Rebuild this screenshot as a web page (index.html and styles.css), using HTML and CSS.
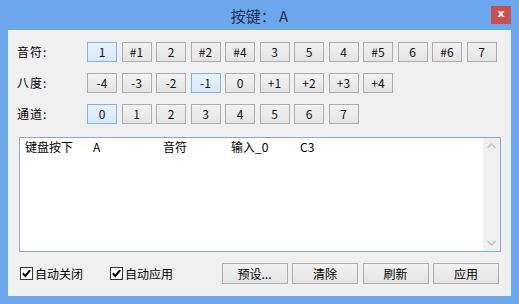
FILE: index.html
```html
<!DOCTYPE html>
<html lang="zh">
<head>
<meta charset="utf-8">
<title>按键</title>
<link rel="stylesheet" href="styles.css">
</head>
<body>
<div class="window">
  <div class="titlebar">
    <span class="spacer"></span>
    <span class="title">按键： A</span>
    <span class="close">x</span>
  </div>
  <div class="client">
    <div class="row">
      <span class="label">音符:</span>
      <div class="btns">
        <span class="btn on">1</span><span class="btn">#1</span><span class="btn">2</span><span class="btn">#2</span><span class="btn">#4</span><span class="btn">3</span><span class="btn">5</span><span class="btn">4</span><span class="btn">#5</span><span class="btn">6</span><span class="btn">#6</span><span class="btn">7</span>
      </div>
    </div>
    <div class="row">
      <span class="label">八度:</span>
      <div class="btns">
        <span class="btn">-4</span><span class="btn">-3</span><span class="btn">-2</span><span class="btn on">-1</span><span class="btn">0</span><span class="btn">+1</span><span class="btn">+2</span><span class="btn">+3</span><span class="btn">+4</span>
      </div>
    </div>
    <div class="row last">
      <span class="label">通道:</span>
      <div class="btns">
        <span class="btn on">0</span><span class="btn">1</span><span class="btn">2</span><span class="btn">3</span><span class="btn">4</span><span class="btn">5</span><span class="btn">6</span><span class="btn">7</span>
      </div>
    </div>
    <div class="listbox">
      <div class="list">
        <div class="item">
          <span class="c1">键盘按下</span><span class="c2">A</span><span class="c3">音符</span><span class="c4">输入_0</span><span class="c5">C3</span>
        </div>
      </div>
      <div class="scrollbar">
        <svg class="arrow" width="17" height="17" viewBox="0 0 17 17"><path d="M4.5 10 L8.5 6 L12.5 10" fill="none" stroke="#c2c2c2" stroke-width="1.5"/></svg>
        <svg class="arrow" width="17" height="17" viewBox="0 0 17 17"><path d="M4.5 7 L8.5 11 L12.5 7" fill="none" stroke="#c2c2c2" stroke-width="1.5"/></svg>
      </div>
    </div>
    <div class="footer">
      <label class="check"><svg width="13" height="13" viewBox="0 0 13 13"><rect x="0.5" y="0.5" width="12" height="12" fill="#fff" stroke="#333"/><path d="M2.8 6.3 L5.3 9 L10.2 3.2" fill="none" stroke="#000" stroke-width="2"/></svg><span>自动关闭</span></label>
      <label class="check second"><svg width="13" height="13" viewBox="0 0 13 13"><rect x="0.5" y="0.5" width="12" height="12" fill="#fff" stroke="#333"/><path d="M2.8 6.3 L5.3 9 L10.2 3.2" fill="none" stroke="#000" stroke-width="2"/></svg><span>自动应用</span></label>
      <div class="actions">
        <span class="pbtn">预设...</span><span class="pbtn">清除</span><span class="pbtn">刷新</span><span class="pbtn">应用</span>
      </div>
    </div>
  </div>
</div>
</body>
</html>
```
FILE: styles.css
```css
body {
  margin: 0;
}
.window {
  width: 519px;
  height: 304px;
  background: #6ca7ec;
  display: flex;
  flex-direction: column;
  font-family: "Noto Sans CJK SC", "Noto Sans", sans-serif;
  font-size: 12px;
  color: #000;
}
.titlebar {
  height: 30px;
  flex: none;
  display: grid;
  grid-template-columns: 1fr auto 1fr;
  align-items: center;
}
.title {
  font-size: 15px;
  color: #1c3253;
  line-height: 20px;
  padding-top: 1px;
}
.close {
  justify-self: end;
  align-self: start;
  margin-top: 6px;
  margin-right: 8px;
  width: 20px;
  height: 18px;
  background: #c75050;
  color: #fff;
  font-family: "DejaVu Sans", sans-serif;
  font-weight: bold;
  font-size: 11px;
  line-height: 16px;
  text-align: center;
}
.client {
  flex: 1;
  margin: 0 8px 8px;
  background: #f0f0f0;
  padding: 12px 10px 12px 9px;
  display: flex;
  flex-direction: column;
}
.row {
  display: flex;
  align-items: center;
  height: 20px;
  margin-bottom: 11px;
}
.row.last {
  margin-bottom: 13px;
}
.label {
  width: 70px;
  flex: none;
  line-height: 20px;
  letter-spacing: 1px;
}
.btns {
  display: flex;
  gap: 4.5px;
}
.btn {
  width: 30px;
  height: 20px;
  box-sizing: border-box;
  border: 1px solid #acacac;
  background: linear-gradient(#f2f2f2, #e4e4e4);
  display: flex;
  align-items: center;
  justify-content: center;
  line-height: 18px;
  color: #111;
}
.btn.on {
  border-color: #7eb4ea;
  background: linear-gradient(#e8f2fc, #d6e9fb);
}
.listbox {
  margin-left: 2px;
  width: 482px;
  height: 115px;
  box-sizing: border-box;
  border: 1px solid #84a7d4;
  background: #fff;
  display: flex;
}
.list {
  flex: 1;
  padding: 1px 0 0 5px;
}
.item {
  display: flex;
  line-height: 16px;
}
.c1 { width: 68px; }
.c2 { width: 70px; }
.c3 { width: 68px; }
.c4 { width: 69px; }
.c5 { width: 40px; }
.scrollbar {
  width: 17px;
  background: #f0f0f0;
  display: flex;
  flex-direction: column;
  justify-content: space-between;
}
.arrow {
  display: block;
}
.footer {
  margin-top: 11px;
  height: 21px;
  display: flex;
  align-items: center;
}
.check {
  display: flex;
  align-items: center;
  gap: 2px;
  margin-left: 3px;
}
.check svg {
  display: block;
}
.check.second {
  margin-left: 27px;
}
.actions {
  margin-left: auto;
  margin-right: 2px;
  display: flex;
  gap: 4.5px;
}
.pbtn {
  width: 66px;
  height: 21px;
  box-sizing: border-box;
  border: 1px solid #acacac;
  background: linear-gradient(#f2f2f2, #e4e4e4);
  display: flex;
  align-items: center;
  justify-content: center;
  line-height: 19px;
}
```
